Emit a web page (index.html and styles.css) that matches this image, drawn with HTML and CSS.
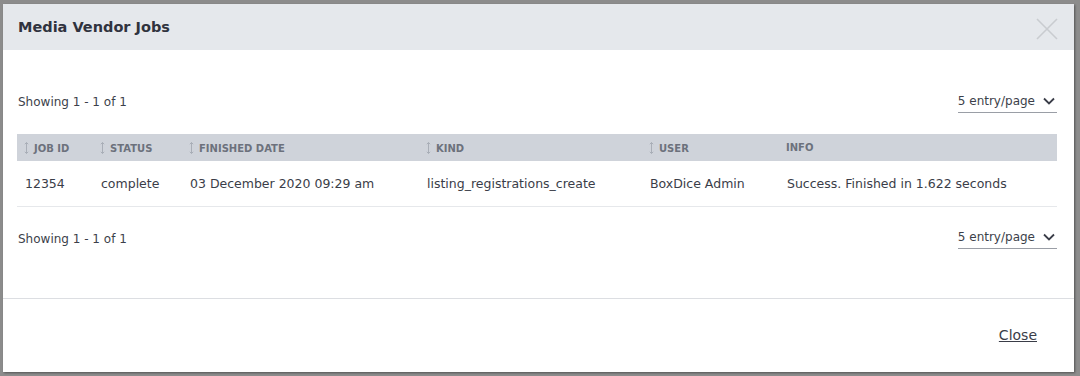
FILE: index.html
```html
<!DOCTYPE html>
<html lang="en">
<head>
    <meta charset="UTF-8">
    <meta name="viewport" content="width=device-width, initial-scale=1.0">
    <title>Media Vendor Jobs</title>
    <link rel="stylesheet" href="styles.css">
</head>
<body>
    <div class="modal">
        <!-- Header -->
        <div class="modal-header">
            <h2>Media Vendor Jobs</h2>
            <button class="modal-close" aria-label="Close">
                <svg width="24" height="24" viewBox="0 0 24 24"><path d="M2 2 L22 22 M22 2 L2 22" stroke="#c9ccd0" stroke-width="1.6" fill="none"/></svg>
            </button>
        </div>

        <!-- Body -->
        <div class="modal-body">
            <div class="pager">
                <span>Showing 1 - 1 of 1</span>
                <div class="page-size">
                    <span>5 entry/page</span>
                    <svg width="12" height="8" viewBox="0 0 12 8"><path d="M1 1.5 L6 6.5 L11 1.5" stroke="#3a3d48" stroke-width="1.8" fill="none"/></svg>
                </div>
            </div>

            <table class="jobs">
                <thead>
                    <tr>
                        <th class="col-id"><svg class="sort" width="5" height="12" viewBox="0 0 5 12"><path d="M2.5 0.5 V11.5 M0.8 2.2 L2.5 0.5 L4.2 2.2 M0.8 9.8 L2.5 11.5 L4.2 9.8" stroke="#a9aeb7" stroke-width="1" fill="none"/></svg>Job ID</th>
                        <th class="col-status"><svg class="sort" width="5" height="12" viewBox="0 0 5 12"><path d="M2.5 0.5 V11.5 M0.8 2.2 L2.5 0.5 L4.2 2.2 M0.8 9.8 L2.5 11.5 L4.2 9.8" stroke="#a9aeb7" stroke-width="1" fill="none"/></svg>Status</th>
                        <th class="col-date"><svg class="sort" width="5" height="12" viewBox="0 0 5 12"><path d="M2.5 0.5 V11.5 M0.8 2.2 L2.5 0.5 L4.2 2.2 M0.8 9.8 L2.5 11.5 L4.2 9.8" stroke="#a9aeb7" stroke-width="1" fill="none"/></svg>Finished Date</th>
                        <th class="col-kind"><svg class="sort" width="5" height="12" viewBox="0 0 5 12"><path d="M2.5 0.5 V11.5 M0.8 2.2 L2.5 0.5 L4.2 2.2 M0.8 9.8 L2.5 11.5 L4.2 9.8" stroke="#a9aeb7" stroke-width="1" fill="none"/></svg>Kind</th>
                        <th class="col-user"><svg class="sort" width="5" height="12" viewBox="0 0 5 12"><path d="M2.5 0.5 V11.5 M0.8 2.2 L2.5 0.5 L4.2 2.2 M0.8 9.8 L2.5 11.5 L4.2 9.8" stroke="#a9aeb7" stroke-width="1" fill="none"/></svg>User</th>
                        <th class="col-info">Info</th>
                    </tr>
                </thead>
                <tbody>
                    <tr>
                        <td>12354</td>
                        <td>complete</td>
                        <td>03 December 2020 09:29 am</td>
                        <td>listing_registrations_create</td>
                        <td>BoxDice Admin</td>
                        <td>Success. Finished in 1.622 seconds</td>
                    </tr>
                </tbody>
            </table>

            <div class="pager">
                <span>Showing 1 - 1 of 1</span>
                <div class="page-size">
                    <span>5 entry/page</span>
                    <svg width="12" height="8" viewBox="0 0 12 8"><path d="M1 1.5 L6 6.5 L11 1.5" stroke="#3a3d48" stroke-width="1.8" fill="none"/></svg>
                </div>
            </div>
        </div>

        <!-- Footer -->
        <div class="modal-footer">
            <a class="close-link">Close</a>
        </div>
    </div>
</body>
</html>
```

FILE: styles.css
```css
* {
    margin: 0;
    padding: 0;
    box-sizing: border-box;
    font-family: 'DejaVu Sans', 'Open Sans', sans-serif;
}

body {
    width: 1080px;
    height: 376px;
    background: #8c8c8c;
    padding: 4px 6px 4px 3px;
    overflow: hidden;
}

.modal {
    background: white;
    height: 368px;
    display: flex;
    flex-direction: column;
    box-shadow: 1px 1px 2px rgba(0, 0, 0, 0.4);
}

.modal-header {
    height: 46px;
    background: #e5e8ec;
    display: flex;
    align-items: center;
    justify-content: space-between;
    padding: 0 15px 0 15px;
}

.modal-header h2 {
    font-size: 14.5px;
    font-weight: bold;
    color: #30333e;
}

.modal-close {
    border: none;
    background: none;
    width: 24px;
    height: 24px;
    margin-top: 4px;
    cursor: pointer;
}

.modal-body {
    padding: 40px 17px 0 14px;
    height: 249px;
    border-bottom: 1px solid #dcdee2;
}

.pager {
    display: flex;
    justify-content: space-between;
    align-items: center;
    height: 24px;
    font-size: 12px;
    color: #3c3f4a;
    padding-left: 1px;
}

.page-size {
    display: flex;
    align-items: center;
    gap: 8px;
    padding: 2px 2px 4px 0;
    border-bottom: 1px solid #9a9ea6;
}

.jobs {
    width: 100%;
    border-collapse: collapse;
    margin: 20px 0 20px;
    table-layout: fixed;
}

.jobs th {
    background: #cfd3da;
    height: 27px;
    text-align: left;
    font-size: 10px;
    font-weight: bold;
    text-transform: uppercase;
    color: #6c717c;
    padding: 0 0 0 7px;
}

.jobs td {
    height: 45px;
    font-size: 12.5px;
    color: #3a3d48;
    padding: 0 0 0 8px;
    border-bottom: 1px solid #e6e8eb;
    white-space: nowrap;
}

.col-id { width: 76px; }
.col-status { width: 89px; }
.col-date { width: 237px; }
.col-kind { width: 223px; }
.col-user { width: 137px; }

.sort {
    margin-right: 5px;
    vertical-align: -2px;
}

.modal-footer {
    flex: 1;
    display: flex;
    justify-content: flex-end;
    align-items: center;
    padding: 0 37px 2px 0;
}

.close-link {
    font-size: 14px;
    color: #3a3d48;
    text-decoration: underline;
    cursor: pointer;
}
```
